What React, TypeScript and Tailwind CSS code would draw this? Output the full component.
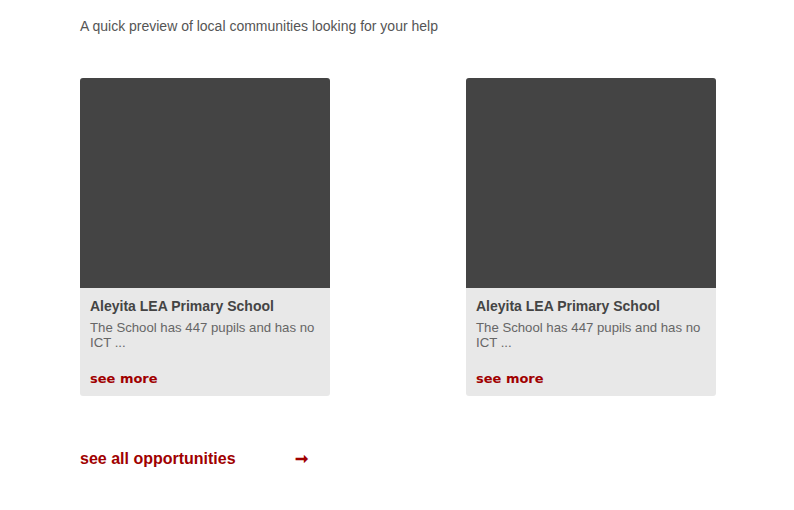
const cards = [
  { title: 'Aleyita LEA Primary School', text: 'The School has 447 pupils and has no ICT ...' },
  { title: 'Aleyita LEA Primary School', text: 'The School has 447 pupils and has no ICT ...' },
];

export default function App() {
  return (
    <div className="w-[794px] h-[510px] bg-white font-['Liberation_Sans',Arial,sans-serif] pl-[80px] pt-[17px]">
      <p className="text-[14px] leading-[18px] text-[#555]">
        A quick preview of local communities looking for your help
      </p>

      <div className="flex gap-[136px] mt-[43px]">
        {cards.map((c, i) => (
          <div key={i} className="w-[250px] h-[318px] rounded-[3px] bg-[#e8e8e8] overflow-hidden flex flex-col">
            <div className="h-[210px] bg-[#444]" />
            <div className="px-[10px] pt-[10px] flex flex-col flex-1">
              <h3 className="text-[14px] leading-[17px] font-bold text-[#444]">{c.title}</h3>
              <p className="text-[13.2px] leading-[15px] text-[#666] mt-[5px]">{c.text}</p>
              <a href="#" className="mt-[21px] font-['DejaVu_Sans',Verdana,sans-serif] font-bold text-[13px] leading-[16px] text-[#a00000]">
                see more
              </a>
            </div>
          </div>
        ))}
      </div>

      <div className="flex items-center w-[230px] justify-between mt-[53px]">
        <a href="#" className="text-[16px] leading-[20px] font-bold text-[#a00000]">see all opportunities</a>
        <span className="text-[#a00000] font-bold text-[16px] leading-[20px] mr-[2px]">➞</span>
      </div>
    </div>
  );
}
